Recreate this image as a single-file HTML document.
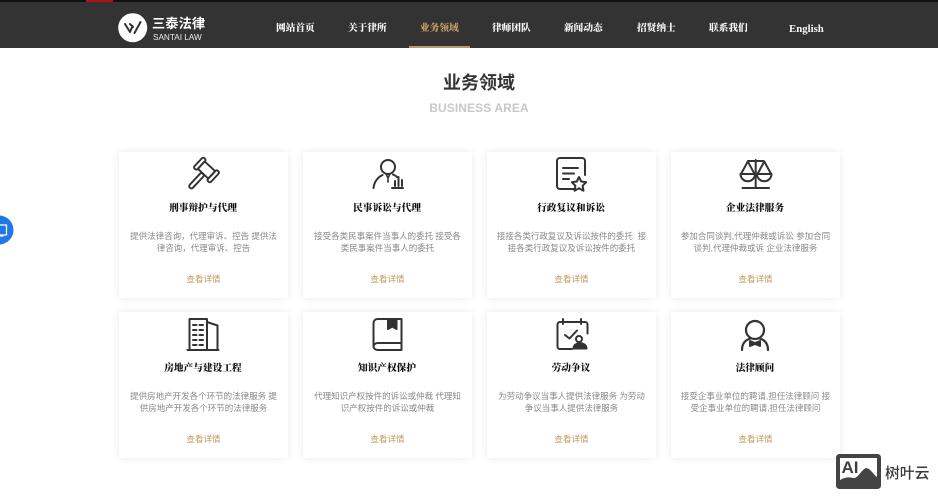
<!DOCTYPE html>
<html lang="zh"><head><meta charset="utf-8"><title>业务领域</title>
<style>
*{margin:0;padding:0;box-sizing:border-box}
html,body{width:938px;height:500px;overflow:hidden;background:#fff}
body{position:relative;font-family:"Liberation Sans","Noto Sans CJK SC",sans-serif;filter:blur(.35px)}
.top{position:absolute;left:0;top:0;width:938px;height:2px;background:#111}
.red{position:absolute;left:86px;top:0;width:27px;height:2px;background:#b01218}
.nav{position:absolute;left:0;top:2px;width:938px;height:46px;background:#333}
.nav a{position:absolute;top:19.500px;font:900 9.700px/14px "Liberation Serif","Noto Serif CJK SC",serif;color:#f8f8f8;white-space:nowrap}
.nav a.on{color:#c8a063}
.ul{position:absolute;left:409px;top:46px;width:61px;height:2px;background:#b59a76}
.brand{position:absolute;left:152px;top:15px;font:700 13.200px/18px "Liberation Sans","Noto Sans CJK SC",sans-serif;color:#fff;letter-spacing:.1px}
.brand2{position:absolute;left:153px;top:32px;font:8.200px/11px "Liberation Sans",sans-serif;color:#eee}
h1{position:absolute;left:379px;width:200px;top:70px;text-align:center;font:700 18px/26px "Liberation Sans","Noto Sans CJK SC",sans-serif;color:#333}
.en{position:absolute;left:379px;width:200px;top:100px;text-align:center;font:700 12px/16px "Liberation Sans",sans-serif;letter-spacing:.1px;color:#c8c8c8}
.c{position:absolute;width:169px;height:146px;background:#fff;box-shadow:0 0 8px rgba(0,0,0,.09)}
.c h3{position:absolute;left:0;width:168px;top:49px;text-align:center;font:900 9.700px/16px "Liberation Serif","Noto Serif CJK SC",serif;color:#111}
.c p{position:absolute;left:9px;width:151px;top:78px;text-align:center;font:8.500px/12px "Liberation Sans","Noto Sans CJK SC",sans-serif;color:#888}
.c a{position:absolute;left:0;width:169px;top:121px;text-align:center;font:8.500px/12px "Liberation Sans","Noto Sans CJK SC",sans-serif;color:#bb9e62}
svg.ic{position:absolute;left:0;top:0}
.wm{position:absolute;left:885px;top:463px;font:500 14.800px/20px "Noto Sans CJK SC",sans-serif;color:#3a3a3a;white-space:nowrap}
.ai{position:absolute;left:841.500px;top:458px;font:700 17px/19px "Liberation Sans",sans-serif;color:#3f3f3f}
</style></head><body>
<div class="top"></div><div class="red"></div>
<div class="nav">
<a style="left:276px">网站首页</a><a style="left:348px">关于律所</a><a class="on" style="left:420px">业务领域</a><a style="left:492px">律师团队</a><a style="left:564px">新闻动态</a><a style="left:637px">招贤纳士</a><a style="left:709px">联系我们</a><a style="left:789px;font-size:10.800px">English</a>
</div>
<div class="ul"></div>
<div class="brand">三泰法律</div><div class="brand2">SANTAI LAW</div>
<h1>业务领域</h1><div class="en">BUSINESS AREA</div>

<div class="c" style="left:119px;top:152px"><h3>刑事辩护与代理</h3><p>提供法律咨询，代理审诉、控告 提供法律咨询，代理审诉、控告</p><a>查看详情</a></div>
<div class="c" style="left:303px;top:152px"><h3>民事诉讼与代理</h3><p>接受各类民事案件当事人的委托 接受各类民事案件当事人的委托</p><a>查看详情</a></div>
<div class="c" style="left:487px;top:152px"><h3>行政复议和诉讼</h3><p>接接各类行政复议及诉讼按件的委托&nbsp; 接接各类行政复议及诉讼按件的委托</p><a>查看详情</a></div>
<div class="c" style="left:671px;top:152px"><h3>企业法律服务</h3><p>参加合同谈判,代理仲裁或诉讼 参加合同谈判,代理仲裁或诉 企业法律服务</p><a>查看详情</a></div>
<div class="c" style="left:119px;top:312px"><h3>房地产与建设工程</h3><p>提供房地产开发各个环节的法律服务 提供房地产开发各个环节的法律服务</p><a>查看详情</a></div>
<div class="c" style="left:303px;top:312px"><h3>知识产权保护</h3><p>代理知识产权按件的诉讼或仲裁 代理知识产权按件的诉讼或仲裁</p><a>查看详情</a></div>
<div class="c" style="left:487px;top:312px"><h3>劳动争议</h3><p>为劳动争议当事人提供法律服务 为劳动争议当事人提供法律服务</p><a>查看详情</a></div>
<div class="c" style="left:671px;top:312px"><h3>法律顾问</h3><p>接受企事业单位的聘请,担任法律顾问 接受企事业单位的聘请,担任法律顾问</p><a>查看详情</a></div>

<svg class="ic" width="938" height="500" viewBox="0 0 938 500" fill="none" stroke="#333" stroke-width="2" stroke-linecap="round" stroke-linejoin="round">
<!-- logo -->
<circle cx="132.700" cy="27.700" r="14.500" fill="#fff" stroke="none"/>
<path d="M125 24l5 8 2.500-6M134.500 33l6-11M130 24l3 3" stroke="#333" stroke-width="2"/>
<!-- gavel -->
<g transform="translate(206.500 170) rotate(43) scale(.84)" stroke-width="2.300">
<rect x="-13.500" y="-8.500" width="5" height="17" rx="2"/>
<rect x="8.500" y="-8.500" width="5" height="17" rx="2"/>
<rect x="-8.500" y="-6" width="17" height="12"/>
<rect x="-2.600" y="6" width="5.200" height="23" rx="2.600"/>
</g>
<!-- person + chart -->
<circle cx="388" cy="167" r="7"/>
<path d="M373.500 188c.8-6.500 4-10.500 9-13M393 174.500c1.500.6 3 1.500 4 2.500"/>
<path d="M386.500 175l1.500 3 1.500-3M388 178.500v3.500" stroke-width="1.600"/>
<path d="M392 188h11M395 186v-5M398.500 186v-9M402 186v-6"/>
<!-- doc + star -->
<path d="M575 189h-15a3 3 0 0 1-3-3v-25a3 3 0 0 1 3-3h22a3 3 0 0 1 3 3v14"/>
<path d="M563 168h15M563 173.500h11M563 179h6"/>
<path d="M579 177l2.200 4.500 5 .7-3.600 3.500.9 5-4.500-2.400-4.500 2.400.9-5-3.600-3.500 5-.7z"/>
<!-- scales -->
<path d="M755.700 160v28M742.500 188h26.500M748 161h15.500"/>
<path d="M740.500 174h14.500a7.200 7.200 0 0 1-14.500 0zM757 174h14.500a7.200 7.200 0 0 1-14.500 0z"/>
<path d="M741 174l6.800-12.500 6.800 12.500M757.500 174l6.800-12.500 6.800 12.500"/>
<!-- building -->
<path d="M187.500 350h31M189.500 350v-31h17.500v31M207 322l10.500 3.500v24.500"/>
<path d="M193 325h3.500M199.500 325h3.500M193 330h3.500M199.500 330h3.500M193 335h3.500M199.500 335h3.500M193 340h3.500M199.500 340h3.500M193 345h3.500M199.500 345h3.500"/>
<!-- book -->
<path d="M401.500 319h-24a4 4 0 0 0-4 4v23a4 4 0 0 0 4 4h24zM373.500 347a4 4 0 0 1 4-4h24"/>
<path d="M388 319h8.500v10l-4.200-2.500-4.300 2.500z" fill="#333"/>
<!-- calendar -->
<path d="M572 349h-12a2.500 2.500 0 0 1-2.500-2.500v-22a2.500 2.500 0 0 1 2.500-2.500h25a2.500 2.500 0 0 1 2.500 2.500v9M563 319v5M581 319v5M565 335l4.500 3.500 7.500-8"/>
<circle cx="579" cy="339" r="3"/>
<path d="M573.500 348.500c0-7 13-7 13 0z" fill="#333"/>
<!-- advisor -->
<circle cx="755" cy="330" r="9" stroke-width="2.200"/>
<path d="M742 350c0-6 3-10 8.500-11.500M768 350c0-6-3-10-8.500-11.500" stroke-width="2.200"/>
<path d="M750 341l5 2 5-2v5l-5-2-5 2z" fill="#333"/>
<!-- floating blue button -->
<circle cx="-1" cy="230" r="14.500" fill="#2277e6" stroke="none"/>
<path d="M0 225h6.500v10H0M0 236h3" stroke="#fff" stroke-width="1.300"/>
<!-- watermark -->
<rect x="836" y="454" width="45" height="35" rx="3.500" fill="#444" stroke="none"/>
<rect x="840" y="458" width="37" height="27" fill="#fff" stroke="none"/>
<path d="M840 480c5-3 9-3 13-2 5 1 8-8 13-10 4 0 7 6 11 9v8h-37z" fill="#444" stroke="none"/>
</svg>
<div class="ai">AI</div>
<div class="wm">树叶云</div>
</body></html>
